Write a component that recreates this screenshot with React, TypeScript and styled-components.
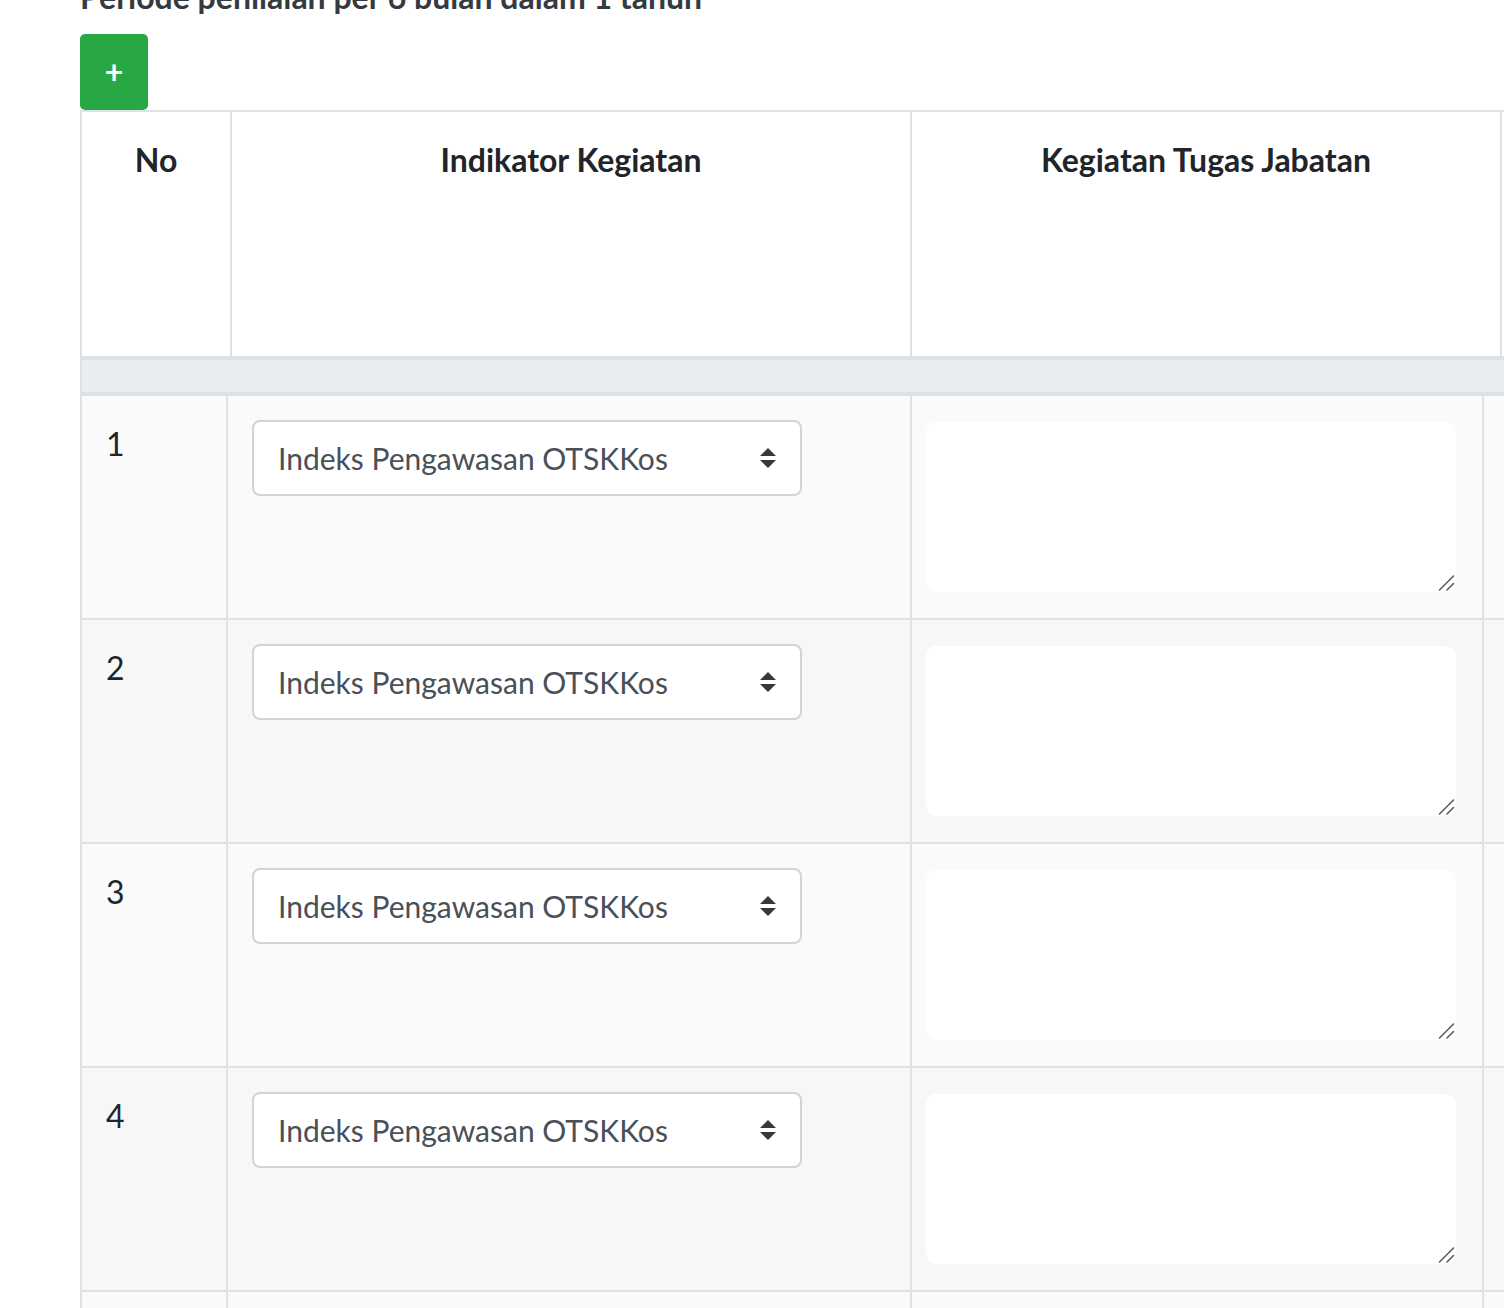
import React from "react";
import styled, { createGlobalStyle } from "styled-components";

const GlobalStyle = createGlobalStyle`
  html, body {
    margin: 0;
    padding: 0;
    background: #ffffff;
    overflow: hidden;
  }
  body {
    font-family: "Lato", "Liberation Sans", sans-serif;
    color: #212529;
  }
  * { box-sizing: border-box; }
`;

const Page = styled.div`
  width: 1504px;
  height: 1308px;
  overflow: hidden;
  padding-left: 80px;
`;

const Title = styled.h5`
  margin: -22px 0 18px 0;
  font-size: 32px;
  line-height: 38px;
  font-weight: 700;
  color: #343a40;
  white-space: nowrap;
`;

const AddButton = styled.button`
  display: flex;
  align-items: center;
  justify-content: center;
  width: 68px;
  height: 76px;
  padding: 0;
  border: 2px solid #28a745;
  border-radius: 5px;
  background: #28a745;
  color: #ffffff;
  font-family: inherit;
  font-size: 32px;
  font-weight: 700;
  line-height: 1;
  cursor: pointer;
`;

const Table = styled.div`
  width: 1700px;
  border-left: 2px solid #dee2e6;
`;

const HeadRow = styled.div`
  display: grid;
  grid-template-columns: 150px 680px 590px 278px;
  border-top: 2px solid #dee2e6;
  border-bottom: 4px solid #dee2e6;
  background: #ffffff;
`;

const HeadCell = styled.div`
  height: 244px;
  padding: 24px;
  border-right: 2px solid #dee2e6;
  text-align: center;
  font-size: 32px;
  line-height: 48px;
  font-weight: 700;
  color: #212529;
`;

const Band = styled.div`
  height: 36px;
  background: #e9ecf0;
  border-bottom: 4px solid #dee2e6;
`;

const BodyRow = styled.div<{ $alt: boolean }>`
  display: grid;
  grid-template-columns: 146px 684px 572px 296px;
  background: ${(p) => (p.$alt ? "#f7f7f7" : "#fafafa")};
  border-bottom: 2px solid #dee2e6;
`;

const Cell = styled.div`
  height: 222px;
  padding: 24px;
  border-right: 2px solid #dee2e6;
`;

const NoCell = styled(Cell)`
  font-size: 32px;
  line-height: 48px;
  color: #212529;
`;

const TextCell = styled(Cell)`
  padding: 26px 26px 26px 14px;
`;

const SelectWrap = styled.div`
  position: relative;
  width: 550px;
`;

const Select = styled.select`
  appearance: none;
  -webkit-appearance: none;
  display: block;
  width: 550px;
  height: 76px;
  padding: 0 56px 0 24px;
  border: 2px solid #ced4da;
  border-radius: 8px;
  background: #ffffff;
  color: #495057;
  font-family: inherit;
  font-size: 30px;
  line-height: 48px;
`;

const Arrow = styled.svg`
  position: absolute;
  right: 26px;
  top: 28px;
  width: 16px;
  height: 20px;
  pointer-events: none;
`;

const AreaWrap = styled.div`
  position: relative;
  width: 530px;
  height: 170px;
`;

const TextArea = styled.textarea`
  display: block;
  width: 530px;
  height: 170px;
  border: 0;
  border-radius: 10px;
  background: #ffffff;
  font-family: inherit;
  font-size: 32px;
  outline: none;
  resize: none;
`;

const Grip = styled.svg`
  position: absolute;
  right: 1px;
  bottom: 1px;
  width: 17px;
  height: 16px;
  pointer-events: none;
`;

const rows = [1, 2, 3, 4, 5];

export default function App() {
  return (
    <>
      <GlobalStyle />
      <Page>
        <Title>Periode penilaian per 6 bulan dalam 1 tahun</Title>
        <AddButton>+</AddButton>
        <Table>
          <HeadRow>
            <HeadCell>No</HeadCell>
            <HeadCell>Indikator Kegiatan</HeadCell>
            <HeadCell>Kegiatan Tugas Jabatan</HeadCell>
            <HeadCell />
          </HeadRow>
          <Band />
          {rows.map((n) => (
            <BodyRow key={n} $alt={n % 2 === 0}>
              <NoCell>{n}</NoCell>
              <Cell>
                <SelectWrap>
                  <Select defaultValue="ot">
                    <option value="ot">Indeks Pengawasan OTSKKos</option>
                  </Select>
                  <Arrow viewBox="0 0 4 5">
                    <path fill="#343a40" d="M2 0L0 2h4zm0 5L0 3h4z" />
                  </Arrow>
                </SelectWrap>
              </Cell>
              <TextCell>
                <AreaWrap>
                  <TextArea />
                  <Grip viewBox="0 0 17 16">
                    <path
                      d="M1.5 15 L15.5 1 M9 15 L15.5 8.5"
                      stroke="#5f5f5f"
                      strokeWidth="1.6"
                      strokeLinecap="round"
                      fill="none"
                    />
                  </Grip>
                </AreaWrap>
              </TextCell>
              <Cell />
            </BodyRow>
          ))}
        </Table>
      </Page>
    </>
  );
}
